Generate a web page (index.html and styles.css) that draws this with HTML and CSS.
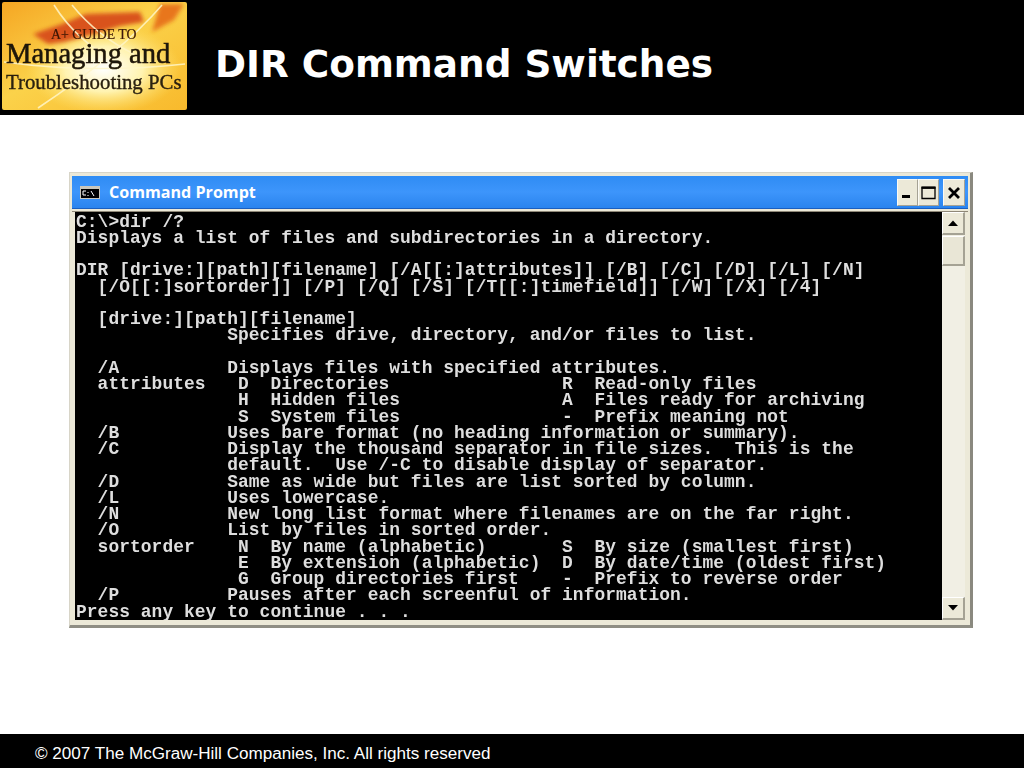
FILE: index.html
```html
<!DOCTYPE html>
<html lang="en">
<head>
<meta charset="utf-8">
<title>DIR Command Switches</title>
<link rel="stylesheet" href="styles.css">
</head>
<body>
<div class="slide">
  <header class="top">
    <svg class="logo" width="185" height="108" viewBox="0 0 185 108">
      <defs>
        <linearGradient id="bg" x1="0" y1="0" x2="1" y2="1">
          <stop offset="0" stop-color="#f5a623"/>
          <stop offset="0.45" stop-color="#fbd24a"/>
          <stop offset="1" stop-color="#f8b92c"/>
        </linearGradient>
        <radialGradient id="glow" cx="0.55" cy="0.62" r="0.42">
          <stop offset="0" stop-color="#ffffff"/>
          <stop offset="0.5" stop-color="#fff3b0"/>
          <stop offset="1" stop-color="#ffe26a" stop-opacity="0"/>
        </radialGradient>
        <filter id="soft"><feGaussianBlur stdDeviation="2"/></filter>
        <filter id="tiny"><feGaussianBlur stdDeviation="0.35"/></filter>
      </defs>
      <rect width="185" height="108" rx="2" fill="url(#bg)"/>
      <rect width="185" height="108" fill="url(#glow)"/>
      <path d="M31 32 L60 22 L84 12 L138 10 L142 20 L118 24 L92 32 L62 40 L46 42 Z" fill="#d9531a" filter="url(#soft)"/>
      <path d="M158 2 L182 2 L172 18 L150 30 Z" fill="#e8761c" filter="url(#soft)"/>
      <g fill="none" stroke="#fff6c8" stroke-width="1.6" opacity="0.85">
        <path d="M52 3 Q75 40 118 62"/>
        <path d="M70 3 Q95 34 132 52"/>
        <path d="M160 3 Q120 50 36 106"/>
        <path d="M2 60 Q90 72 183 62"/>
      </g>
      <g filter="url(#tiny)">
        <text class="lg-a" x="49" y="37">A+ GUIDE TO</text>
        <text class="lg-m" x="4" y="61">Managing and</text>
        <text class="lg-t" x="4" y="87">Troubleshooting PCs</text>
      </g>
    </svg>
    <h1 class="title">DIR Command Switches</h1>
  </header>
  <main class="body">
    <section class="window">
      <div class="titlebar">
        <svg class="appicon" width="20" height="13" viewBox="0 0 20 13">
          <rect width="20" height="13" fill="#c9c6bb"/>
          <rect x="1" y="3" width="18" height="9" fill="#000"/>
          <path d="M3 5h3M3 5v4M3 9h3M8 6v1M8 9v1M11 5l3 5" fill="none" stroke="#fff" stroke-width="1"/>
        </svg>
        <span class="wintitle">Command Prompt</span>
        <div class="controls">
          <span class="ctl"><svg width="19" height="25" viewBox="0 0 19 25"><rect x="4" y="15" width="8" height="3" fill="#000"/></svg></span>
          <span class="ctl"><svg width="19" height="25" viewBox="0 0 19 25"><path d="M3 7.5h13v11H3z" fill="none" stroke="#000" stroke-width="1.3"/><rect x="2.5" y="6.5" width="14" height="2.4" fill="#000"/></svg></span>
          <span class="ctl gap"><svg width="20" height="25" viewBox="0 0 20 25"><path d="M5 8l10 10M15 8L5 18" stroke="#000" stroke-width="2.8"/></svg></span>
        </div>
      </div>
      <div class="client">
<pre class="console">C:\&gt;dir /?
Displays a list of files and subdirectories in a directory.

DIR [drive:][path][filename] [/A[[:]attributes]] [/B] [/C] [/D] [/L] [/N]
  [/O[[:]sortorder]] [/P] [/Q] [/S] [/T[[:]timefield]] [/W] [/X] [/4]

  [drive:][path][filename]
              Specifies drive, directory, and/or files to list.

  /A          Displays files with specified attributes.
  attributes   D  Directories                R  Read-only files
               H  Hidden files               A  Files ready for archiving
               S  System files               -  Prefix meaning not
  /B          Uses bare format (no heading information or summary).
  /C          Display the thousand separator in file sizes.  This is the
              default.  Use /-C to disable display of separator.
  /D          Same as wide but files are list sorted by column.
  /L          Uses lowercase.
  /N          New long list format where filenames are on the far right.
  /O          List by files in sorted order.
  sortorder    N  By name (alphabetic)       S  By size (smallest first)
               E  By extension (alphabetic)  D  By date/time (oldest first)
               G  Group directories first    -  Prefix to reverse order
  /P          Pauses after each screenful of information.
Press any key to continue . . .</pre>
        <div class="scrollbar">
          <span class="sbtn"><svg width="12" height="8" viewBox="0 0 12 8"><path d="M1 7L6 1.5 11 7z" fill="#000"/></svg></span>
          <span class="thumb"></span>
          <span class="track"></span>
          <span class="sbtn"><svg width="12" height="8" viewBox="0 0 12 8"><path d="M1 1L6 6.5 11 1z" fill="#000"/></svg></span>
        </div>
      </div>
    </section>
  </main>
  <footer class="bottom">© 2007 The McGraw-Hill Companies, Inc. All rights reserved</footer>
</div>
</body>
</html>
```
FILE: styles.css
```css
* { box-sizing: border-box; }
html, body { margin: 0; padding: 0; }
body { background: #fff; }
.slide {
  width: 1024px;
  height: 768px;
  display: flex;
  flex-direction: column;
  overflow: hidden;
}
.top {
  height: 115px;
  flex: none;
  background: #000;
  display: flex;
  align-items: flex-start;
  padding: 2px 0 0 2px;
}
.logo { flex: none; display: block; }
.lg-a { font: 13.8px "Liberation Serif", serif; fill: #3a1608; stroke: #3a1608; stroke-width: 0.2px; }
.lg-m { font: 28.6px "Liberation Serif", serif; fill: #1d1408; stroke: #1d1408; stroke-width: 0.5px; }
.lg-t { font: 20.8px "Liberation Serif", serif; fill: #2a2010; stroke: #2a2010; stroke-width: 0.35px; }
.title {
  margin: 38px 0 0 28px;
  font: bold 37.4px/48px "DejaVu Sans", sans-serif;
  color: #fff;
  white-space: nowrap;
}
.body { flex: 1; min-height: 0; padding: 57px 0 0 69px; }
.window {
  width: 904px;
  height: 456px;
  background: #ece9d8;
  border: 1px solid #d8d5c8;
  border-right: 3px solid #8a897f;
  border-bottom: 3px solid #8f8e84;
  padding: 3px 2px 5px 2px;
  display: flex;
  flex-direction: column;
}
.titlebar {
  height: 33px;
  flex: none;
  background: linear-gradient(#2f8cf4, #3d95fb 50%, #2a84ee);
  display: flex;
  align-items: center;
  padding: 0 3px 0 8px;
  border-bottom: 1px solid #1a5fc0;
}
.appicon { flex: none; }
.wintitle {
  margin-left: 9px;
  font: bold 16.1px "Open Sans", "Liberation Sans", sans-serif;
  color: #fff;
}
.controls { margin-left: auto; display: flex; }
.ctl {
  width: 21px;
  height: 27px;
  background: #ece9d8;
  border: 1px solid #fbfaf4;
  border-right-color: #a5a294;
  border-bottom-color: #a5a294;
  display: flex;
  align-items: center;
  justify-content: center;
}
.ctl.gap { width: 22px; margin-left: 4px; }
.client {
  flex: 1;
  min-height: 0;
  display: flex;
  margin-top: 2px;
  padding-left: 3px;
  border-top: 1px solid #8f8878;
}
.console {
  margin: 0;
  width: 867px;
  flex: none;
  background: #000;
  color: #dedede;
  padding: 1.5px 0 0 1px;
  font: bold 17.9px/16.25px "Liberation Mono", monospace;
  letter-spacing: 0.065px;
  overflow: hidden;
  filter: blur(0.35px);
}
.scrollbar {
  width: 23px;
  flex: none;
  background: #f1efe4;
  display: flex;
  flex-direction: column;
}
.sbtn {
  height: 23px;
  flex: none;
  background: #ece9d8;
  border: 1px solid #fff;
  border-right: 2px solid #a5a294;
  border-bottom: 2px solid #a5a294;
  display: flex;
  align-items: center;
  justify-content: center;
}
.thumb {
  height: 30px;
  flex: none;
  margin-top: 1px;
  background: #e9e6d6;
  border: 1px solid #fff;
  border-right: 2px solid #a5a294;
  border-bottom: 2px solid #a5a294;
}
.track { flex: 1; }
.bottom {
  height: 34px;
  flex: none;
  background: #000;
  color: #fff;
  padding-left: 35px;
  font: 17.08px/40px "Liberation Sans", sans-serif;
  white-space: nowrap;
}
```
